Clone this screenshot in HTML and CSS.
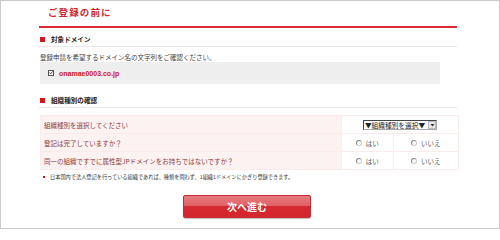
FILE: index.html
```html
<!DOCTYPE html>
<html lang="ja">
<head>
<meta charset="utf-8">
<title>ご登録の前に</title>
<link rel="stylesheet" href="styles.css">
</head>
<body>
<div class="frame">
  <div class="content">
    <h1 class="title">ご登録の前に</h1>

    <h2 class="sec sec-first"><span class="sq"></span>対象ドメイン</h2>
    <p class="desc">登録申請を希望するドメイン名の文字列をご確認ください。</p>
    <div class="domainbox">
      <span class="check"><svg width="6" height="6" viewBox="0 0 6 6"><path d="M0.8 2.4 L2.4 4.4 L5.4 0.6" fill="none" stroke="#222" stroke-width="1.2"/></svg></span>
      <span class="domain">onamae0003.co.jp</span>
    </div>

    <h2 class="sec sec-second"><span class="sq"></span>組織種別の確認</h2>
    <table class="qtable">
      <tr>
        <th>組織種別を選択してください</th>
        <td colspan="2" class="center">
          <span class="fakeselect"><span class="seltext">▼組織種別を選択▼</span><span class="selbtn"><svg width="5" height="4" viewBox="0 0 5 4"><path d="M0.5 1 L4.5 1 L2.5 3.5 Z" fill="#333"/></svg></span></span>
        </td>
      </tr>
      <tr>
        <th>登記は完了していますか？</th>
        <td class="radio-cell"><span class="radio"></span>はい</td>
        <td class="radio-cell"><span class="radio"></span>いいえ</td>
      </tr>
      <tr>
        <th>同一の組織ですでに属性型JPドメインをお持ちではないですか？</th>
        <td class="radio-cell"><span class="radio"></span>はい</td>
        <td class="radio-cell"><span class="radio"></span>いいえ</td>
      </tr>
    </table>

    <p class="note"><span class="bullet"></span>日本国内で法人登記を行っている組織であれば、種類を問わず、1組織1ドメインにかぎり登録できます。</p>

    <div class="btnrow"><button class="nextbtn" type="button">次へ進む</button></div>
  </div>
</div>
</body>
</html>
```

FILE: styles.css
```css
html, body {
  margin: 0;
  padding: 0;
  background: #ffffff;
}
body {
  font-family: "Noto Sans CJK JP", "Noto Sans", sans-serif;
  color: #333333;
}
.frame {
  box-sizing: border-box;
  width: 500px;
  height: 229px;
  border: 1px solid #cbcbcb;
  background: #ffffff;
}
.content {
  width: 418px;
  margin-left: 38px;
}
.title {
  margin: 0;
  padding: 5px 0 8px 9px;
  font-size: 9.5px;
  line-height: 12px;
  font-weight: bold;
  letter-spacing: 1.1px;
  color: #d3262c;
  border-bottom: 2px solid #dc2b33;
}
.sec {
  display: flex;
  align-items: center;
  margin: 0;
  padding: 0 0 3px 1px;
  font-size: 6.6px;
  line-height: 8px;
  font-weight: bold;
  color: #222222;
  border-bottom: 1px solid #e8e8e8;
}
.sec-first { margin-top: 7px; }
.sec-second { margin-top: 12px; }
.sq {
  width: 5px;
  height: 5px;
  background: #d7141c;
  margin-right: 6px;
}
.desc {
  margin: 6px 0 0 1px;
  font-size: 6.5px;
  line-height: 9px;
  color: #444444;
}
.domainbox {
  display: flex;
  align-items: center;
  width: 400px;
  height: 22px;
  margin-left: 1px;
  background: #eeeeee;
  box-sizing: border-box;
  padding-left: 8px;
}
.check {
  display: flex;
  align-items: center;
  justify-content: center;
  box-sizing: border-box;
  width: 6px;
  height: 6px;
  border: 1px solid #555555;
  background: #ffffff;
  margin-right: 5px;
}
.check svg { display: block; }
.domain {
  font-family: "Liberation Sans", Arial, sans-serif;
  font-weight: bold;
  font-size: 7px;
  color: #d4141d;
}
.qtable {
  width: 419px;
  margin: 7px 0 0 1px;
  border-collapse: collapse;
}
.qtable th, .qtable td {
  height: 17px;
  padding: 0;
  border: 1px solid #fcebeb;
  font-size: 6.5px;
  line-height: 8px;
  font-weight: normal;
}
.qtable th {
  width: 297px;
  text-align: left;
  padding-left: 3px;
  background: #fdf2f2;
  color: #8b3a3a;
}
.qtable td { background: #ffffff; }
.center { text-align: center; }
.fakeselect {
  display: inline-flex;
  align-items: center;
  box-sizing: border-box;
  height: 10px;
  border: 1px solid #444444;
  border-right-color: #aaaaaa;
  border-bottom-color: #aaaaaa;
  background: #ffffff;
  vertical-align: middle;
}
.seltext {
  font-size: 6.7px;
  line-height: 8px;
  color: #222222;
  padding: 0 2px 0 1px;
}
.selbtn {
  display: flex;
  align-items: center;
  justify-content: center;
  box-sizing: border-box;
  width: 8px;
  height: 8px;
  background: #e6e6e6;
  border: 1px solid #bbbbbb;
  margin-left: 1px;
}
.radio-cell {
  text-align: center;
  color: #555555;
}
.radio {
  display: inline-block;
  box-sizing: border-box;
  width: 6px;
  height: 6px;
  border-radius: 50%;
  border: 1px solid #888888;
  border-right-color: #cccccc;
  border-bottom-color: #cccccc;
  background: #ffffff;
  margin-right: 4px;
  vertical-align: -0.5px;
}
.note {
  display: flex;
  align-items: center;
  margin: 3px 0 0 4px;
  font-size: 5.2px;
  line-height: 8px;
  color: #333333;
}
.bullet {
  width: 2px;
  height: 2px;
  background: #d7141c;
  margin-right: 5px;
}
.btnrow {
  display: flex;
  justify-content: center;
  margin-top: 14px;
  padding-right: 2px;
}
.nextbtn {
  width: 128px;
  height: 23px;
  border: 1px solid #c82a30;
  border-radius: 2px;
  background: linear-gradient(#e57b7f 0%, #e06468 45%, #d52a31 50%, #d3262d 100%);
  box-shadow: 0 1px 1px rgba(0,0,0,0.25);
  color: #ffffff;
  font-family: "Noto Sans CJK JP", sans-serif;
  font-weight: bold;
  font-size: 10px;
  line-height: 12px;
  padding: 0;
}
```
